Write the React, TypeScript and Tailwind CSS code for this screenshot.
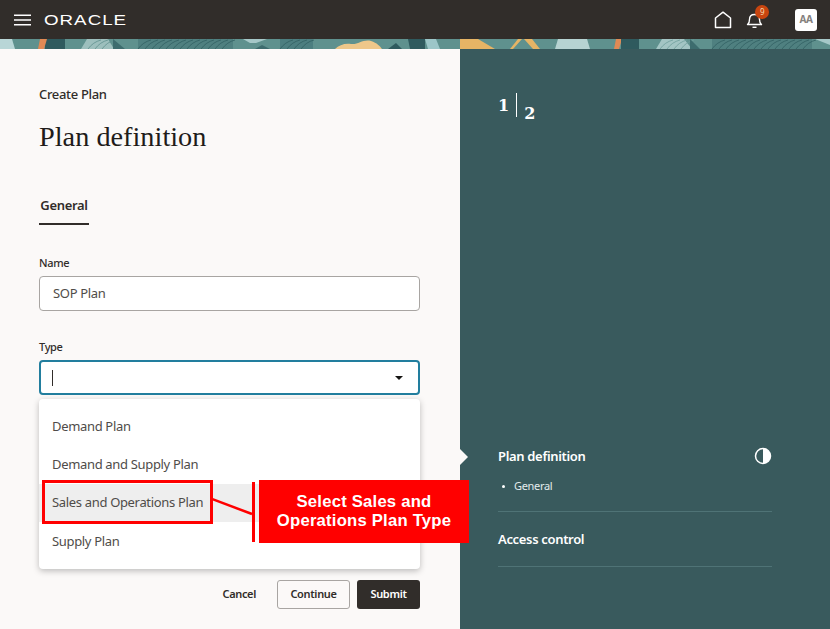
import React from "react";

const sans = "font-['Noto_Sans','Open_Sans',sans-serif]";
const serif = "font-['Liberation_Serif','DejaVu_Serif',serif]";

function Banner() {
  const leaf = (x: number, w: number, key: string, color: string) => (
    <g key={key} stroke={color} strokeWidth="0.8" fill="none">
      {Array.from({ length: Math.floor(w / 7) }).map((_, i) => (
        <path key={i} d={`M${x + i * 7} 10 q5 -7 13 -9`} />
      ))}
    </g>
  );
  return (
    <svg className="block w-full h-[10px]" viewBox="0 0 830 10" preserveAspectRatio="none" aria-hidden="true">
      <rect width="830" height="10" fill="#5f918e" />
      <polygon points="0,0 12,0 15,10 0,10" fill="#b9d6d7" />
      <rect x="45" width="20" height="10" fill="#2f5a5e" />
      <polygon points="40,0 47,0 44,10 38,10" fill="#e08a55" />
      <polygon points="87,0 108,0 114,10 81,10" fill="#9dbfbd" />
      {leaf(88, 24, "a", "#5f918e")}
      <polygon points="113,0 125,10 113,10" fill="#3d6c6e" />
      <rect x="138" width="95" height="10" fill="#4f8080" />
      {leaf(138, 95, "b", "#315f62")}
      <polygon points="243,0 267,0 256,4 250,4" fill="#a6c8c8" />
      <polygon points="255,10 262,6 270,10" fill="#3d6c6e" />
      <rect x="280" width="33" height="10" fill="#4c7e80" />
      {leaf(280, 33, "c", "#315f62")}
      <path d="M335 10c4-4 10-6 16-5 7 1 12-5 20-3 6 2 9 5 11 8z" fill="#eec78a" />
      <polygon points="388,10 396,4 402,10" fill="#2f5a5e" />
      <polygon points="408,0 425,0 425,10 410,10" fill="#2f5a5e" />
      <polygon points="425,0 436,0 440,10 428,10" fill="#9cc6c8" />
      <polygon points="460,0 478,0 495,10 460,10" fill="#e6b465" />
      <polygon points="510,10 518,0 522,0 513,10" fill="#e6b465" />
      <polygon points="524,0 532,0 540,10 533,10" fill="#e6b465" />
      <polygon points="558,0 587,0 590,10 555,10" fill="#b6d3d2" />
      <polygon points="616,0 622,0 619,10 614,10" fill="#e08a55" />
      <rect x="621" width="18" height="10" fill="#2f5a5e" />
      <polygon points="662,0 684,0 692,10 656,10" fill="#a3c5c4" />
      {leaf(660, 28, "d", "#6f9e9c")}
      <polygon points="690,0 700,10 690,10" fill="#3d6c6e" />
      <rect x="712" width="100" height="10" fill="#4f8080" />
      {leaf(712, 100, "e", "#315f62")}
      <polygon points="815,0 830,0 830,6" fill="#a6c8c8" />
    </svg>
  );
}

function Option({ label, active }: { label: string; active?: boolean }) {
  return (
    <div className={`h-[38px] flex items-center pl-[13px] text-[13px] text-[#4f4c49] ${active ? "bg-[#eeeeee]" : ""}`}>
      {label}
    </div>
  );
}

export default function App() {
  return (
    <div className={`relative w-[830px] h-[629px] overflow-hidden flex flex-col bg-[#faf8f6] tracking-[-0.33px] ${sans}`}>
      <header className="h-[39px] bg-[#312d2a] flex items-center shrink-0">
        <svg className="ml-[14px]" width="17" height="12" viewBox="0 0 17 12" aria-hidden="true">
          <path d="M0 1.2h17M0 6h17M0 10.8h17" stroke="#fff" strokeWidth="1.6" />
        </svg>
        <span className="ml-[13px] text-white text-[15px] leading-none tracking-[0.8px] font-['Liberation_Sans',sans-serif] scale-x-[1.25] origin-left">ORACLE</span>
        <div className="ml-auto flex items-center">
          <svg width="18" height="18" viewBox="0 0 18 18" fill="none" aria-hidden="true">
            <path d="M1.5 7 9 1.2 16.5 7V16.5h-15z" stroke="#fff" strokeWidth="1.5" strokeLinejoin="round" />
          </svg>
          <div className="relative ml-[14px] w-[18px] h-[18px]">
            <svg width="18" height="18" viewBox="0 0 18 18" fill="none" aria-hidden="true">
              <path d="M1.5 13.5c1.5-1 2-2 2-5 0-3 2-5 5-5s5 2 5 5c0 3 .5 4 2 5z" stroke="#fff" strokeWidth="1.4" strokeLinejoin="round" />
              <path d="M6.5 16.3h4" stroke="#fff" strokeWidth="1.4" />
            </svg>
            <span className="absolute -top-[6px] left-[9px] w-[14px] h-[14px] rounded-full bg-[#c8450f] text-[#f5d9b0] text-[8px] leading-[14px] text-center">9</span>
          </div>
          <div className="ml-[31px] mr-[13px] w-[22px] h-[22px] bg-white rounded-[3px] flex items-center justify-center text-[10px] font-bold text-[#85817e]">AA</div>
        </div>
      </header>
      <Banner />
      <div className="flex-1 flex min-h-0">
        <main className="relative w-[460px] shrink-0 pl-[39px] bg-[#fbf9f8]">
          <p className="mt-[36px] text-[13px] leading-[18px] font-medium text-[#312d2a]">Create Plan</p>
          <h1 className={`mt-[16px] text-[28.3px] leading-[36px] tracking-normal text-[#1f1c1a] ${serif}`}>Plan definition</h1>
          <div className="mt-[41px] w-[50px] border-b-2 border-[#312d2a] pb-[9px] text-[13px] leading-[18px] font-semibold text-[#312d2a] text-center">General</div>
          <label className="block mt-[30px] text-[11px] leading-[16px] font-medium text-[#312d2a]">Name</label>
          <div className="mt-[5px] w-[381px] h-[35px] bg-white border border-[#a8a5a2] rounded-[4px] flex items-center pl-[13px] text-[13px] text-[#4f4c49]">SOP Plan</div>
          <label className="block mt-[28px] text-[11px] leading-[16px] font-medium text-[#312d2a]">Type</label>
          <div className="mt-[5px] w-[381px] h-[35px] bg-white border-2 border-[#227e9e] rounded-[4px] flex items-center pl-[11px] pr-[15px] justify-between">
            <span className="w-px h-[16px] bg-[#312d2a]" />
            <span className="w-0 h-0 border-x-[4px] border-x-transparent border-t-[4px] border-t-[#161513]" />
          </div>
          <div className="mt-[4px] w-[381px] h-[170px] bg-white rounded-[4px] shadow-[0_2px_6px_rgba(0,0,0,0.25)] pt-[9px]">
            <Option label="Demand Plan" />
            <Option label="Demand and Supply Plan" />
            <Option label="Sales and Operations Plan" active />
            <div className="pt-[1px]">
              <Option label="Supply Plan" />
            </div>
          </div>
          <div className="mt-[11px] w-[381px] flex items-center justify-end text-[11px] font-semibold">
            <span className="mr-[21px] text-[#312d2a]">Cancel</span>
            <span className="w-[73px] h-[29px] flex items-center justify-center border border-[#a8a5a2] rounded-[3px] text-[#312d2a]">Continue</span>
            <span className="ml-[7px] w-[63px] h-[29px] flex items-center justify-center bg-[#312d2a] rounded-[3px] text-white">Submit</span>
          </div>
        </main>
        <aside className="flex-1 relative bg-[#395a5d] pl-[38px] pr-[58px] text-white">
          <span className="absolute left-0 top-[400px] w-0 h-0 border-y-[8px] border-y-transparent border-l-[8px] border-l-[#fbf9f8]" />
          <div className="mt-[44px] flex items-start font-bold tracking-normal font-['DejaVu_Serif',serif]">
            <span className="mt-[2px] text-[16px] leading-[22px]">1</span>
            <span className="ml-[7px] w-px h-[24px] bg-white" />
            <span className="ml-[7px] mt-[10px] text-[16px] leading-[22px]">2</span>
          </div>
          <div className="mt-[322px] flex items-center justify-between">
            <span className="text-[13px] leading-[18px] font-semibold">Plan definition</span>
            <svg width="18" height="18" viewBox="0 0 18 18" aria-hidden="true">
              <circle cx="9" cy="9" r="7.5" fill="#395a5d" stroke="#fff" strokeWidth="1.5" />
              <path d="M9 1.5a7.5 7.5 0 0 1 0 15z" fill="#fff" />
            </svg>
          </div>
          <div className="mt-[13px] pl-[4px] flex items-center text-[11px] leading-[16px] text-[#e4ecec]">
            <span className="w-[3px] h-[3px] rounded-full bg-white mr-[9px]" />General
          </div>
          <div className="mt-[17px] border-t border-[#4f7376]" />
          <div className="mt-[18px] text-[13px] leading-[18px] font-semibold">Access control</div>
          <div className="mt-[18px] border-t border-[#4f7376]" />
        </aside>
      </div>
      {/* callout annotation */}
      <div className="absolute left-[42px] top-[480px] w-[171px] h-[44px] border-[3px] border-[#ff0000]" />
      <svg className="absolute left-[212px] top-[498px]" width="42" height="18" viewBox="0 0 42 18" aria-hidden="true">
        <path d="M0 1 40 16" stroke="#ff0000" strokeWidth="2.5" />
      </svg>
      <div className="absolute left-[252px] top-[482px] w-[3px] h-[60px] bg-[#ff0000]" />
      <div className="absolute left-[259px] top-[480px] w-[210px] h-[63px] bg-[#ff0000] flex items-center justify-center text-center text-white text-[16.7px] leading-[19px] pb-[1px] font-bold tracking-[0.2px] font-['Liberation_Sans',sans-serif]">
        <span>Select Sales and<br />Operations Plan Type</span>
      </div>
    </div>
  );
}
